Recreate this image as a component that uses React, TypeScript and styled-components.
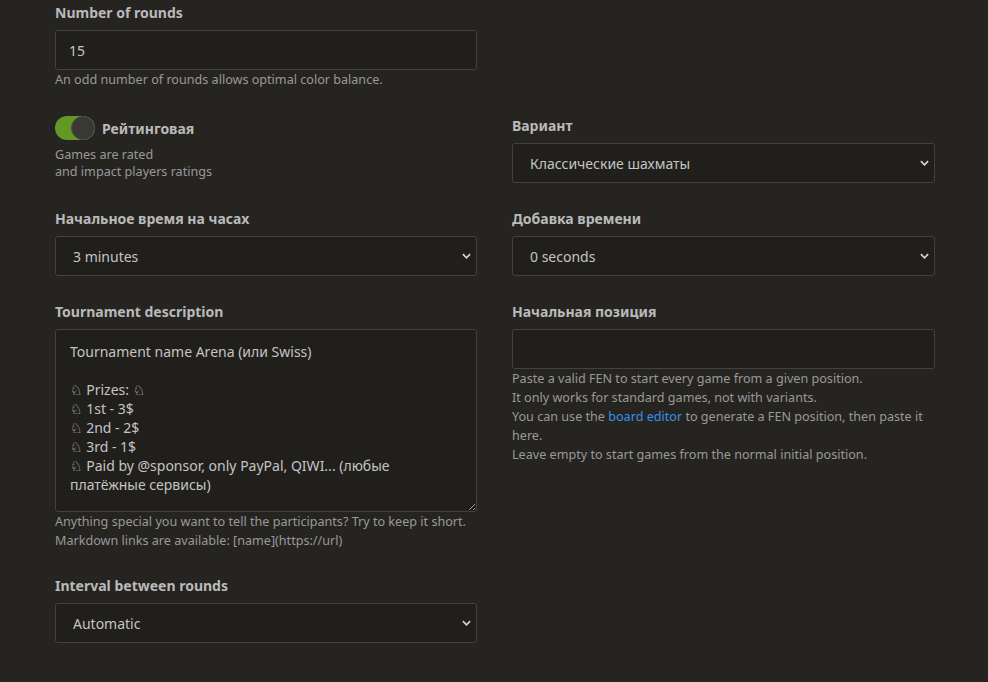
import React from "react";
import styled, { createGlobalStyle } from "styled-components";

const GlobalStyle = createGlobalStyle`
    body {
        margin: 0;
        background: #262421;
        font-family: "Noto Sans", "DejaVu Sans", sans-serif;
        color: #bababa;
    }
`;

const description = `Tournament name Arena (или Swiss)

♘ Prizes: ♘
♘ 1st - 3$
♘ 2nd - 2$
♘ 3rd - 1$
♘ Paid by @sponsor, only PayPal, QIWI... (любые платёжные сервисы)`;

export default () => {
    return (
        <>
            <GlobalStyle />
            <Form>
                <Group first>
                    <Label>Number of rounds</Label>
                    <TextInput defaultValue="15" />
                    <Help>An odd number of rounds allows optimal color balance.</Help>
                </Group>
                <Empty />

                <Group>
                    <ToggleRow>
                        <Toggle>
                            <Knob />
                        </Toggle>
                        <ToggleLabel>Рейтинговая</ToggleLabel>
                    </ToggleRow>
                    <ToggleHelp>
                        Games are rated
                        <br />
                        and impact players ratings
                    </ToggleHelp>
                </Group>
                <Group>
                    <Label>Вариант</Label>
                    <Select value="Классические шахматы" options={["Классические шахматы"]} />
                </Group>

                <Group>
                    <Label>Начальное время на часах</Label>
                    <Select value="3 minutes" options={["3 minutes"]} />
                </Group>
                <Group>
                    <Label>Добавка времени</Label>
                    <Select value="0 seconds" options={["0 seconds"]} />
                </Group>

                <Group>
                    <Label>Tournament description</Label>
                    <TextArea defaultValue={description} />
                    <Help>
                        Anything special you want to tell the participants? Try to keep it short.
                        <br />
                        Markdown links are available: [name](https://url)
                    </Help>
                </Group>
                <Group>
                    <Label>Начальная позиция</Label>
                    <TextInput defaultValue="" />
                    <Help>
                        Paste a valid FEN to start every game from a given position.
                        <br />
                        It only works for standard games, not with variants.
                        <br />
                        You can use the <Link href="#">board editor</Link> to generate a FEN position, then paste it here.
                        <br />
                        Leave empty to start games from the normal initial position.
                    </Help>
                </Group>

                <Group>
                    <Label>Interval between rounds</Label>
                    <Select value="Automatic" options={["Automatic"]} />
                </Group>
            </Form>
        </>
    );
};

const Select = ({ value, options }: { value: string; options: string[] }) => (
    <SelectWrap>
        <StyledSelect defaultValue={value}>
            {options.map(o => (
                <option key={o}>{o}</option>
            ))}
        </StyledSelect>
        <Chevron viewBox="0 0 10 6" width="9" height="6">
            <polyline points="1,1 5,5 9,1" fill="none" stroke="#d0d0d0" strokeWidth="2" />
        </Chevron>
    </SelectWrap>
);

const Form = styled.div`
    display: grid;
    grid-template-columns: 422px 423px;
    column-gap: 35px;
    row-gap: 26px;
    padding: 3px 53px 40px 55px;
    align-items: start;
`;

const Empty = styled.div``;

const Group = styled.div<{ first?: boolean }>`
    display: flex;
    flex-direction: column;
    margin-bottom: ${p => (p.first ? "1px" : "0")};
`;

const Label = styled.label`
    font-size: 14px;
    font-weight: 700;
    line-height: 20px;
    margin-bottom: 7px;
    color: #bababa;
`;

const fieldBase = `
    box-sizing: border-box;
    width: 100%;
    background: #211f1c;
    border: 1px solid #43403d;
    border-radius: 3px;
    color: #c4c4c4;
    font-family: "Noto Sans", "DejaVu Sans", sans-serif;
    font-size: 14px;
    outline: none;
`;

const TextInput = styled.input`
    ${fieldBase}
    height: 40px;
    padding: 0 13px;
`;

const TextArea = styled.textarea`
    ${fieldBase}
    height: 183px;
    padding: 12px 14px;
    line-height: 19px;
    resize: vertical;
`;

const SelectWrap = styled.div`
    position: relative;
`;

const StyledSelect = styled.select`
    ${fieldBase}
    height: 40px;
    padding: 0 17px;
    appearance: none;
    -webkit-appearance: none;
`;

const Chevron = styled.svg`
    position: absolute;
    right: 6px;
    top: 17px;
    pointer-events: none;
`;

const Help = styled.div`
    font-size: 12.6px;
    line-height: 19px;
    color: #999;
`;

const ToggleHelp = styled.div`
    font-size: 12.6px;
    line-height: 17px;
    color: #999;
    margin-top: 6px;
`;

const ToggleRow = styled.div`
    display: flex;
    align-items: center;
    height: 24px;
    gap: 7px;
`;

const Toggle = styled.div`
    position: relative;
    width: 40px;
    height: 24px;
    border-radius: 12px;
    background: #629924;
`;

const Knob = styled.div`
    position: absolute;
    right: 0;
    top: 0;
    box-sizing: border-box;
    width: 24px;
    height: 24px;
    border-radius: 50%;
    background: #3a3835;
    border: 1px solid #4a4744;
`;

const ToggleLabel = styled.span`
    font-size: 14px;
    font-weight: 700;
    color: #bababa;
`;

const Link = styled.a`
    color: #3692e7;
    text-decoration: none;
`;
